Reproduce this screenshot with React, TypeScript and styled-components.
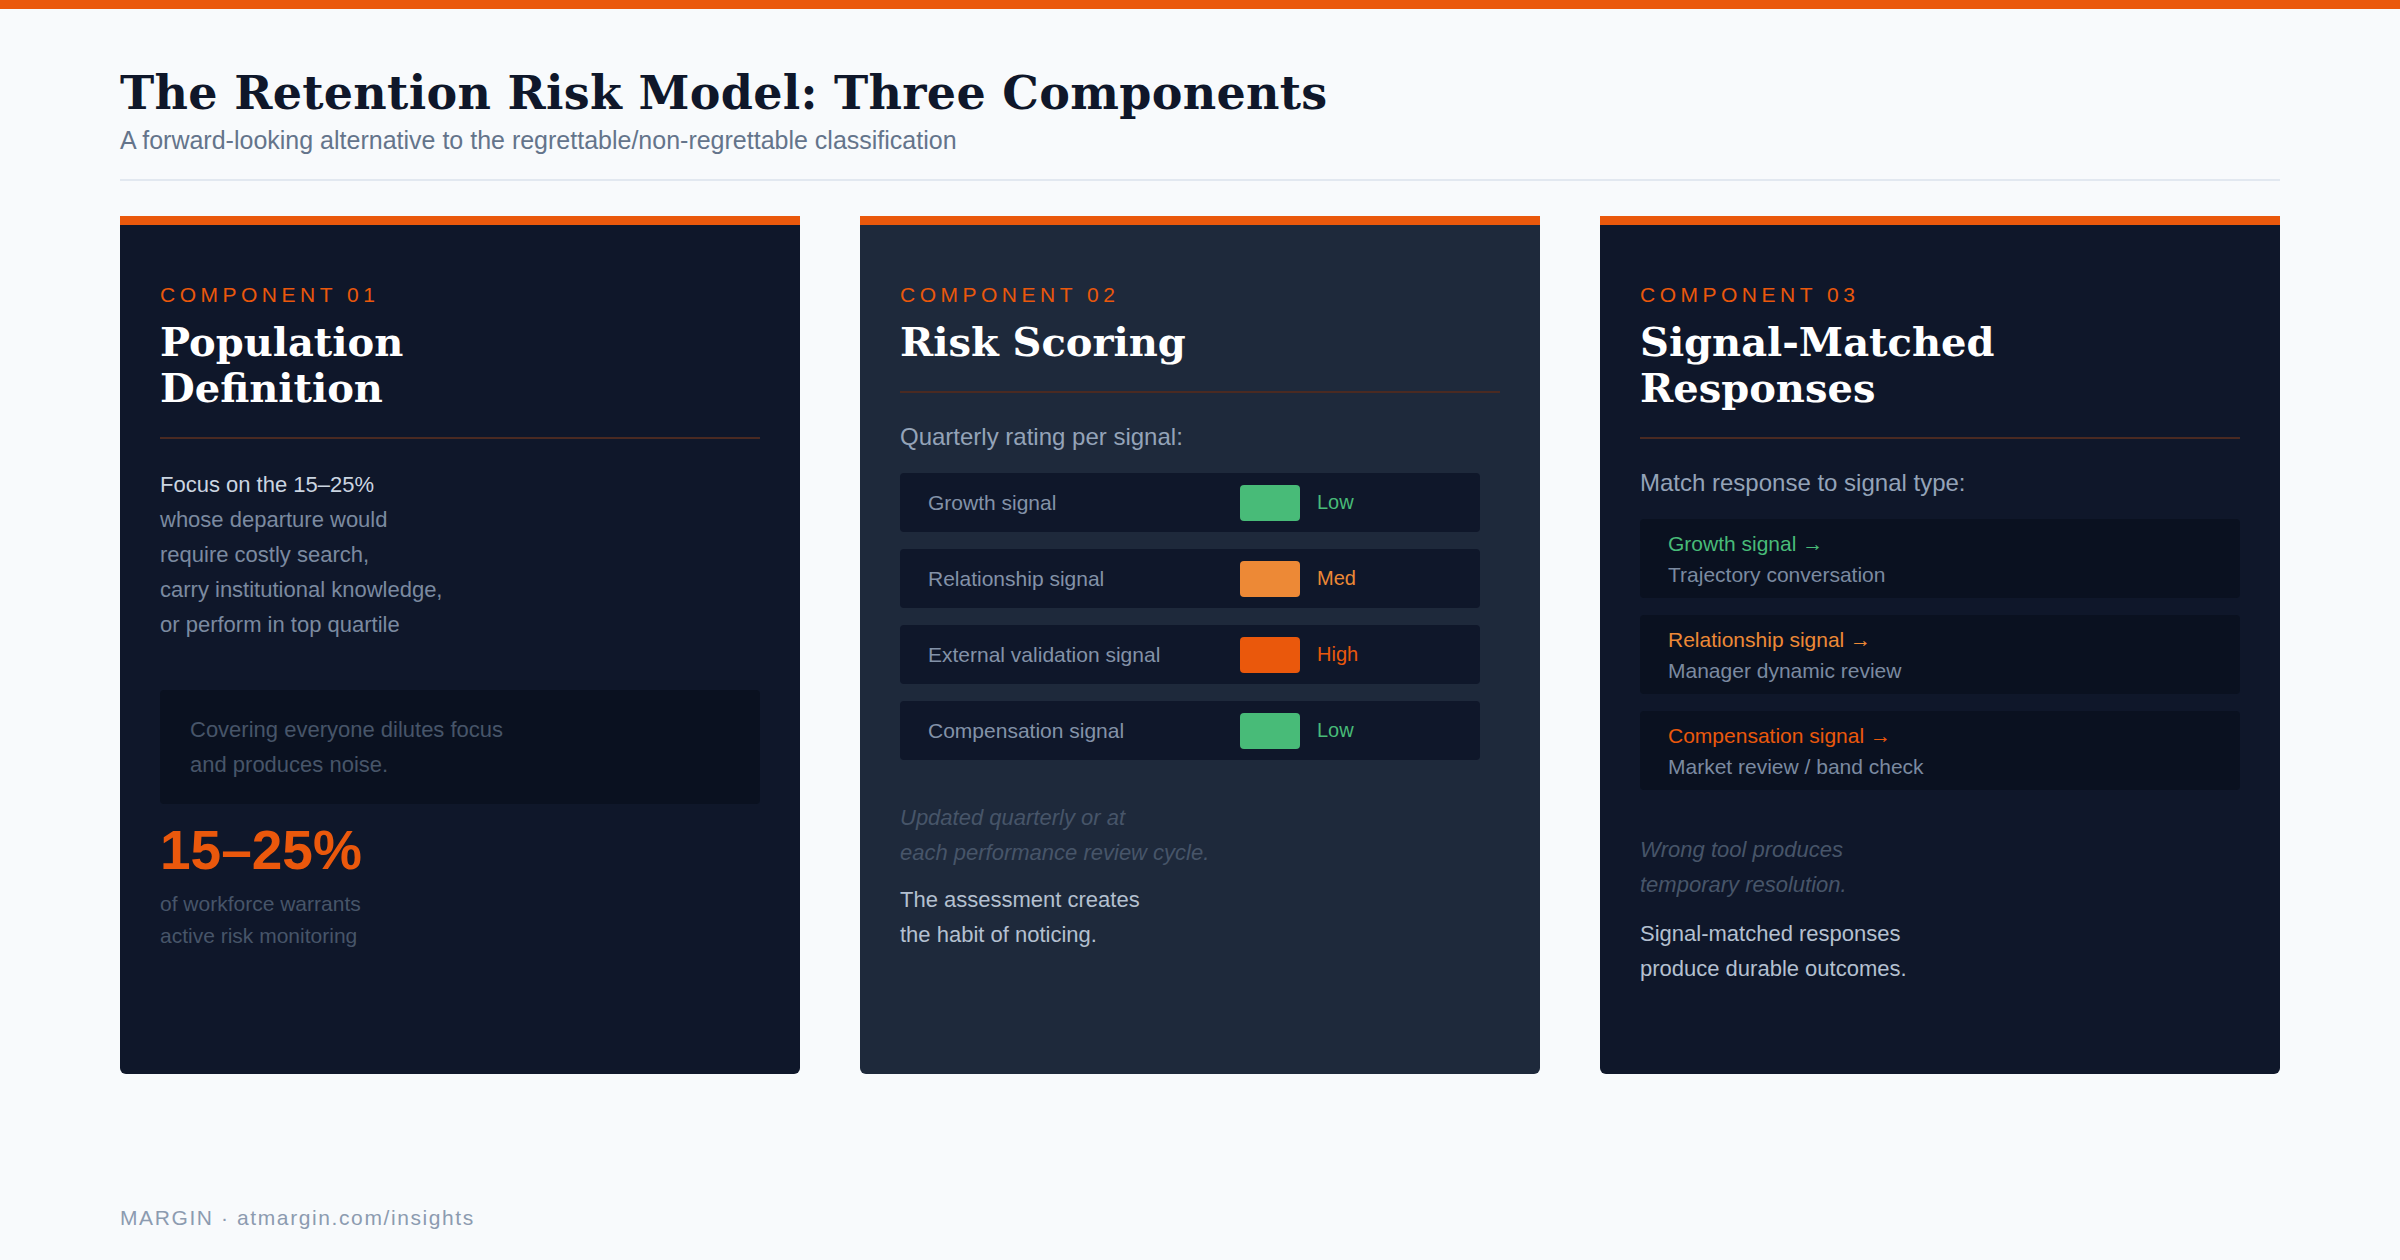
import React from "react";
import styled, { createGlobalStyle } from "styled-components";

const Global = createGlobalStyle`
  html, body { margin: 0; padding: 0; background: #f8fafc; }
  * { box-sizing: border-box; }
`;

const Page = styled.div`
  min-height: 1260px;
  display: flex;
  flex-direction: column;
  border-top: 9px solid #ea580c;
  padding: 56px 120px 30px;
  font-family: "Liberation Sans", Arial, sans-serif;
`;

const Title = styled.h1`
  margin: 0;
  font-family: "DejaVu Serif", Georgia, serif;
  font-weight: 700;
  font-size: 46px;
  line-height: 56px;
  color: #0f172a;
  letter-spacing: 0.3px;
`;

const Subtitle = styled.p`
  margin: 2px 0 0;
  font-size: 25px;
  line-height: 34px;
  color: #64748b;
`;

const Rule = styled.div`
  height: 2px;
  background: #e2e8f0;
  margin: 22px 0 35px;
`;

const Grid = styled.div`
  display: grid;
  grid-template-columns: repeat(3, 1fr);
  gap: 60px;
`;

const Card = styled.div<{ $alt?: boolean }>`
  height: 858px;
  background: ${(p) => (p.$alt ? "#1e293b" : "#0f172a")};
  border-top: 9px solid #ea580c;
  border-radius: 0 0 6px 6px;
  padding: 56px 40px 40px;
  display: flex;
  flex-direction: column;
`;

const Label = styled.div`
  font-size: 21px;
  letter-spacing: 4.5px;
  color: #ea580c;
  line-height: 28px;
`;

const CardTitle = styled.h2`
  margin: 10px 0 0;
  font-family: "DejaVu Serif", Georgia, serif;
  font-weight: 700;
  font-size: 40px;
  line-height: 46px;
  color: #ffffff;
`;

const CardRule = styled.div`
  height: 2px;
  background: #4a2a22;
  margin: 26px 0 28px;
`;

const Body = styled.p<{ $color?: string; $italic?: boolean }>`
  margin: 0;
  font-size: 22px;
  line-height: 35px;
  color: ${(p) => p.$color || "#94a3b8"};
  font-style: ${(p) => (p.$italic ? "italic" : "normal")};
`;

const Lead = styled.span`
  color: #cbd5e1;
`;

const NoteBox = styled.div`
  margin-top: 48px;
  background: #0a1120;
  border-radius: 4px;
  padding: 22px 30px;
`;

const Big = styled.div`
  margin-top: 14px;
  font-size: 55px;
  font-weight: 700;
  line-height: 64px;
  color: #ea580c;
`;

const Caption = styled.p`
  margin: 6px 0 0;
  font-size: 21px;
  line-height: 32px;
  color: #475569;
`;

const Intro = styled.p`
  margin: 0 0 20px;
  font-size: 24px;
  line-height: 32px;
  color: #94a3b8;
`;

const Rows = styled.div`
  display: flex;
  flex-direction: column;
  gap: 17px;
  width: 580px;
`;

const Row = styled.div`
  height: 59px;
  background: #0f172a;
  border-radius: 4px;
  display: flex;
  align-items: center;
  padding-left: 28px;
`;

const RowLabel = styled.span`
  width: 312px;
  font-size: 21px;
  color: #8392a8;
`;

const Swatch = styled.span<{ $c: string }>`
  width: 60px;
  height: 36px;
  border-radius: 4px;
  background: ${(p) => p.$c};
`;

const Level = styled.span<{ $c: string }>`
  margin-left: 17px;
  font-size: 20px;
  color: ${(p) => p.$c};
`;

const Responses = styled.div`
  display: flex;
  flex-direction: column;
  gap: 17px;
`;

const Resp = styled.div`
  background: #0a1120;
  border-radius: 4px;
  height: 79px;
  padding: 12px 28px;
  display: flex;
  flex-direction: column;
  justify-content: center;
`;

const RespTitle = styled.div<{ $c: string }>`
  font-size: 21px;
  line-height: 31px;
  color: ${(p) => p.$c};
`;

const RespSub = styled.div`
  font-size: 21px;
  line-height: 31px;
  color: #7b8aa0;
`;

const Footer = styled.div`
  margin-top: auto;
  font-size: 21px;
  letter-spacing: 1.6px;
  color: #8c9bb0;
`;

const GREEN = "#48bb78";
const AMBER = "#ed8936";
const RED = "#ea580c";

const signals = [
  { name: "Growth signal", c: GREEN, l: "Low" },
  { name: "Relationship signal", c: AMBER, l: "Med" },
  { name: "External validation signal", c: RED, l: "High" },
  { name: "Compensation signal", c: GREEN, l: "Low" },
];

const responses = [
  { t: "Growth signal", c: GREEN, s: "Trajectory conversation" },
  { t: "Relationship signal", c: AMBER, s: "Manager dynamic review" },
  { t: "Compensation signal", c: RED, s: "Market review / band check" },
];

export default function App() {
  return (
    <>
      <Global />
      <Page>
        <Title>The Retention Risk Model: Three Components</Title>
        <Subtitle>A forward-looking alternative to the regrettable/non-regrettable classification</Subtitle>
        <Rule />
        <Grid>
          <Card>
            <Label>COMPONENT 01</Label>
            <CardTitle>Population<br />Definition</CardTitle>
            <CardRule />
            <Body $color="#7b8aa0">
              <Lead>Focus on the 15–25%</Lead><br />
              whose departure would<br />
              require costly search,<br />
              carry institutional knowledge,<br />
              or perform in top quartile
            </Body>
            <NoteBox>
              <Body $color="#475569">Covering everyone dilutes focus<br />and produces noise.</Body>
            </NoteBox>
            <Big>15–25%</Big>
            <Caption>of workforce warrants<br />active risk monitoring</Caption>
          </Card>
          <Card $alt>
            <Label>COMPONENT 02</Label>
            <CardTitle>Risk Scoring</CardTitle>
            <CardRule />
            <Intro>Quarterly rating per signal:</Intro>
            <Rows>
              {signals.map((s) => (
                <Row key={s.name}>
                  <RowLabel>{s.name}</RowLabel>
                  <Swatch $c={s.c} />
                  <Level $c={s.c}>{s.l}</Level>
                </Row>
              ))}
            </Rows>
            <Body $italic $color="#475569" style={{ marginTop: 40 }}>
              Updated quarterly or at<br />each performance review cycle.
            </Body>
            <Body $color="#b4c0d0" style={{ marginTop: 12 }}>
              The assessment creates<br />the habit of noticing.
            </Body>
          </Card>
          <Card>
            <Label>COMPONENT 03</Label>
            <CardTitle>Signal-Matched<br />Responses</CardTitle>
            <CardRule />
            <Intro>Match response to signal type:</Intro>
            <Responses>
              {responses.map((r) => (
                <Resp key={r.t}>
                  <RespTitle $c={r.c}>{r.t} →</RespTitle>
                  <RespSub>{r.s}</RespSub>
                </Resp>
              ))}
            </Responses>
            <Body $italic $color="#475569" style={{ marginTop: 42 }}>
              Wrong tool produces<br />temporary resolution.
            </Body>
            <Body $color="#b4c0d0" style={{ marginTop: 14 }}>
              Signal-matched responses<br />produce durable outcomes.
            </Body>
          </Card>
        </Grid>
        <Footer>MARGIN · atmargin.com/insights</Footer>
      </Page>
    </>
  );
}
